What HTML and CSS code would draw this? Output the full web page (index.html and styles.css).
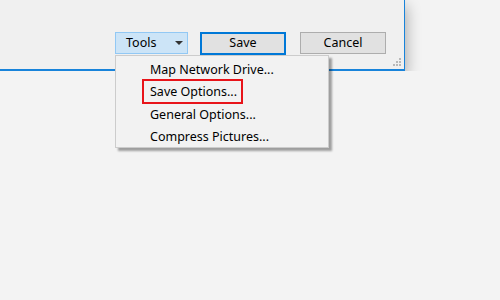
FILE: index.html
```html
<!DOCTYPE html>
<html>
<head>
<meta charset="utf-8">
<link rel="stylesheet" href="styles.css">
</head>
<body>
<div class="window">
  <div class="buttons">
    <div class="btn tools">Tools<span class="arrow"></span></div>
    <div class="btn save">Save</div>
    <div class="btn cancel">Cancel</div>
  </div>
  <div class="grip">
    <svg width="10" height="10" viewBox="0 0 10 10"><g fill="#b8b8b8"><rect x="7" y="0" width="2" height="2"/><rect x="4" y="3" width="2" height="2"/><rect x="7" y="3" width="2" height="2"/><rect x="1" y="6" width="2" height="2"/><rect x="4" y="6" width="2" height="2"/><rect x="7" y="6" width="2" height="2"/></g></svg>
  </div>
</div>
<div class="menu">
  <div class="item">Map Network Drive...</div>
  <div class="item"><span class="mark">Save Options...</span></div>
  <div class="item">General Options...</div>
  <div class="item">Compress Pictures...</div>
</div>
</body>
</html>
```
FILE: styles.css
```css
html, body {
  margin: 0;
  padding: 0;
  background: #f3f3f3;
  font-family: "Noto Sans", "Noto Sans CJK SC", sans-serif;
  font-size: 12.5px;
  color: #000;
}
.window {
  position: relative;
  width: 404px;
  height: 69px;
  background: #f0f0f0;
  border-right: 1px solid #1883da;
  border-bottom: 2px solid #1883da;
  box-shadow: 1px 6px 14px rgba(0,0,0,0.32);
}
.buttons {
  display: flex;
  padding: 32px 0 0 115px;
}
.btn {
  box-sizing: border-box;
  height: 22px;
  display: flex;
  align-items: center;
  justify-content: center;
  background: #e1e1e1;
  border: 1px solid #adadad;
  line-height: 1;
}
.tools {
  width: 73px;
  background: #cce4f7;
  border-color: #92c8f4;
  justify-content: flex-start;
  padding-left: 10px;
}
.arrow {
  margin-left: 19px;
  width: 0;
  height: 0;
  border-left: 4px solid transparent;
  border-right: 4px solid transparent;
  border-top: 4px solid #333;
}
.save {
  width: 86px;
  margin-left: 12px;
  border: 2px solid #0078d7;
  height: 23px;
}
.cancel {
  width: 86px;
  margin-left: 14px;
}
.grip {
  position: absolute;
  right: 2px;
  bottom: 1px;
  width: 10px;
  height: 10px;
}
.grip svg { display: block; }
.menu {
  position: absolute;
  left: 115px;
  top: 55px;
  width: 214px;
  height: 93px;
  box-sizing: border-box;
  background: #f2f2f2;
  border: 1px solid #cccccc;
  box-shadow: 3px 3px 2px rgba(0,0,0,0.35);
  padding-top: 2px;
}
.item {
  height: 22.5px;
  display: flex;
  align-items: center;
  padding-left: 34px;
}
.mark {
  display: inline-block;
  border: 2px solid #e8141a;
  margin-left: -8px;
  padding: 2px 4px 2px 6px;
  line-height: 17px;
}
```
